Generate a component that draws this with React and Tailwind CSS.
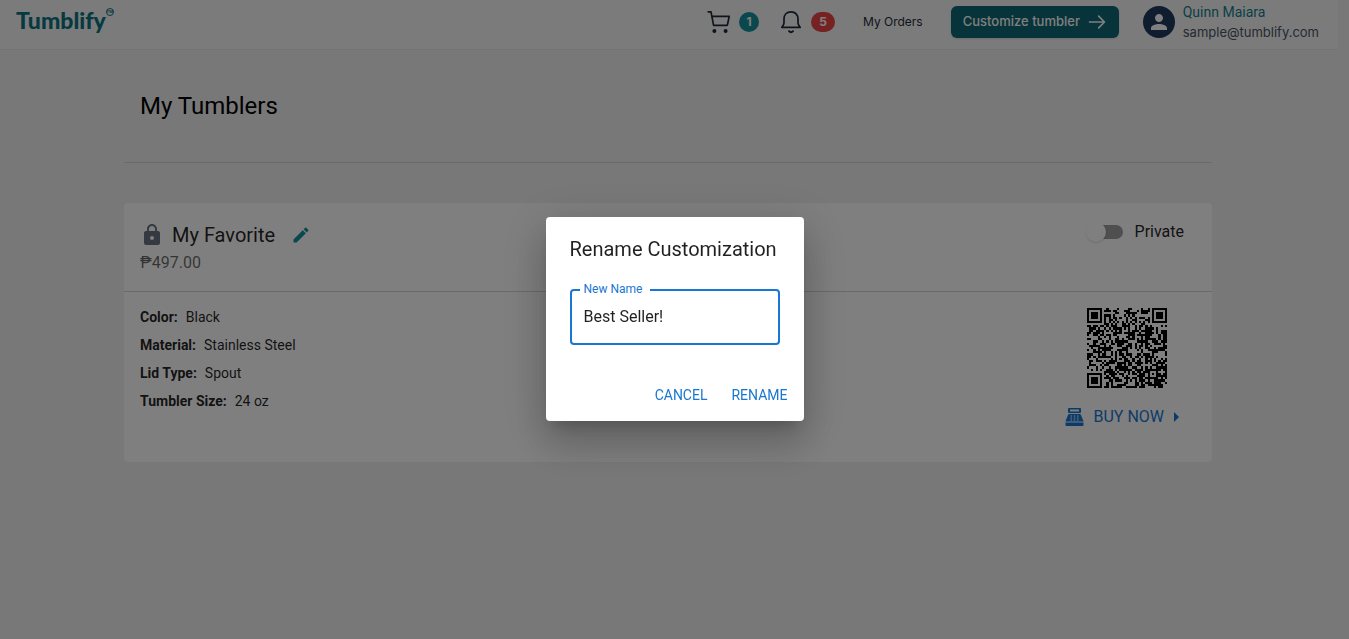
import { useState } from 'react';
import { MdLock, MdEdit, MdPerson, MdArrowRight } from 'react-icons/md';
import { HiOutlineArrowRight } from 'react-icons/hi';

const QR_SIZE = 37;

function ring(x, y, cx, cy, radius) {
  const d = Math.max(Math.abs(x - cx), Math.abs(y - cy));
  if (d > radius + 1) return null;
  if (radius === 3) return d === 3 || d <= 1;
  return d > radius ? null : d !== 1;
}

// Finder, alignment and timing marks around a seeded field of data modules.
function buildQrPath() {
  let seed = 48271;
  let path = '';
  for (let y = 0; y < QR_SIZE; y++) {
    for (let x = 0; x < QR_SIZE; x++) {
      seed = (seed * 48271) % 2147483647;
      let dark = seed / 2147483647 < 0.55;
      if (x === 6 || y === 6) dark = (x + y) % 2 === 0;
      const marks = [
        ring(x, y, 3, 3, 3),
        ring(x, y, QR_SIZE - 4, 3, 3),
        ring(x, y, 3, QR_SIZE - 4, 3),
        ring(x, y, 30, 30, 2),
      ];
      for (const mark of marks) if (mark !== null) dark = mark;
      if (dark) path += `M${x} ${y}h1v1h-1z`;
    }
  }
  return path;
}

const qrPath = buildQrPath();

const specs = [
  ['Color:', 'Black'],
  ['Material:', 'Stainless Steel'],
  ['Lid Type:', 'Spout'],
  ['Tumbler Size:', '24 oz'],
];

function CartIcon() {
  return (
    <svg viewBox="0 0 24 24" className="size-6" fill="none" stroke="currentColor" strokeWidth="1.7" strokeLinecap="round" strokeLinejoin="round" aria-hidden="true">
      <path d="M1.2 1.8H4L6.6 15.4H19.4Q20.3 15.4 20.5 14.5L22.2 6.4H4.9" />
      <circle cx="7.4" cy="21" r="2" fill="currentColor" stroke="none" />
      <circle cx="18.6" cy="21" r="2" fill="currentColor" stroke="none" />
    </svg>
  );
}

function BellIcon() {
  return (
    <svg viewBox="0 0 24 24" className="size-6" fill="none" stroke="currentColor" strokeWidth="1.7" strokeLinecap="round" strokeLinejoin="round" aria-hidden="true">
      <path d="M12 1.8C7.6 1.8 5 5 5 9V12.5Q5 14 4.2 15.2L2.8 17.4H21.2L19.8 15.2Q19 14 19 12.5V9C19 5 16.4 1.8 12 1.8Z" />
      <path d="M10 21.2Q12 23.4 14 21.2" strokeWidth="2" />
    </svg>
  );
}

function RegisterIcon() {
  return (
    <svg viewBox="0 0 20 20" className="size-5" fill="currentColor" aria-hidden="true">
      <path fillRule="evenodd" d="M4 1H15Q16 1 16 2V5Q16 6 15 6H4Q3 6 3 5V2Q3 1 4 1ZM5 2.6V4.4H14V2.6Z" />
      <path fillRule="evenodd" d="M4.5 7H14.5Q15.6 7 16 8L18.6 14.5H.4L3 8Q3.4 7 4.5 7ZM5.5 8.6V9.6H7V8.6ZM8.7 8.6V9.6H10.3V8.6ZM12 8.6V9.6H13.5V8.6ZM5.5 10.6V11.6H7V10.6ZM8.7 10.6V11.6H10.3V10.6ZM12 10.6V11.6H13.5V10.6ZM5.5 12.5V13.5H7V12.5ZM8.7 12.5V13.5H10.3V12.5ZM12 12.5V13.5H13.5V12.5Z" />
      <path d="M.5 15.5H18.5V18Q18.5 19 17.5 19H1.5Q.5 19 .5 18Z" />
    </svg>
  );
}

function Header() {
  return (
    <header className="flex h-[50px] items-start justify-between border-b border-gray-200 bg-[#f7f7f7] pr-[19px] pl-4 font-['Inter',sans-serif]">
      <a href="#home" className="flex items-start pt-1 text-[#0e7481]">
        <span className="font-['Lato',sans-serif] text-[23px] leading-8 font-black">Tumblify</span>
        <span className="mt-1 flex size-2 items-center justify-center rounded-full border border-current text-[4px] leading-none font-bold">TM</span>
      </a>
      <div className="flex h-11 items-center text-[13px] text-gray-800">
        <button type="button" aria-label="Cart" className="flex items-center gap-2">
          <CartIcon />
          <span className="flex size-5 items-center justify-center rounded-full bg-[#14919b] text-xs font-bold text-white">1</span>
        </button>
        <button type="button" aria-label="Notifications" className="ml-5 flex items-center gap-2">
          <BellIcon />
          <span className="flex h-5 w-6 items-center justify-center rounded-full bg-[#ef4444] text-xs font-bold text-white">5</span>
        </button>
        <a href="#orders" className="ml-7 text-xs">My Orders</a>
        <button type="button" className="ml-7 flex h-8 w-[168px] items-center justify-between rounded-md bg-[#0e6674] px-3 text-[13px] font-medium text-white shadow-sm">
          Customize tumbler
          <HiOutlineArrowRight className="size-5" />
        </button>
        <div className="ml-6 flex size-8 items-center justify-center rounded-full bg-[#213a5e] text-white">
          <MdPerson className="size-6" />
        </div>
        <div className="ml-2 flex flex-col">
          <span className="font-['Roboto',sans-serif] text-sm leading-5 text-[#14808a]">Quinn Maiara</span>
          <span className="text-[13px] leading-5 text-gray-600">sample@tumblify.com</span>
        </div>
      </div>
    </header>
  );
}

function TumblerCard() {
  const [shared, setShared] = useState(false);
  return (
    <article className="mt-10 rounded bg-white text-black/87">
      <div className="flex h-[89px] justify-between border-b border-gray-300 px-4 pt-4">
        <div>
          <div className="flex h-8 items-center">
            <MdLock className="size-6 text-gray-500" />
            <h2 className="ml-2 text-xl">My Favorite</h2>
            <button type="button" aria-label="Edit name" className="ml-4 text-[#14919b]">
              <MdEdit className="size-5" />
            </button>
          </div>
          <p className="text-base leading-6 text-black/60">₱497.00</p>
        </div>
        <label className="flex h-6 items-center gap-3 pt-[2px] pr-3 text-base">
          <input
            type="checkbox"
            role="switch"
            checked={shared}
            onChange={(e) => setShared(e.target.checked)}
            className="relative h-[14px] w-[34px] appearance-none rounded-full bg-black/38 before:absolute before:-top-[3px] before:-left-[3px] before:size-5 before:rounded-full before:bg-white before:shadow checked:before:left-4"
          />
          Private
        </label>
      </div>
      <div className="flex justify-between pt-[15px] pr-6 pb-6 pl-4">
        <dl className="flex flex-col gap-2 text-sm leading-5">
          {specs.map(([name, value]) => (
            <div key={name} className="flex gap-2">
              <dt className="font-bold">{name}</dt>
              <dd>{value}</dd>
            </div>
          ))}
        </dl>
        <div className="flex flex-col items-center pt-px">
          <svg viewBox="0 0 37 37" className="size-20" role="img" aria-label="QR code" shapeRendering="crispEdges">
            <path d={qrPath} fill="#000" />
          </svg>
          <button type="button" className="mt-2 flex h-[42px] items-center text-base text-[#1976d2]">
            <RegisterIcon />
            <span className="ml-2">BUY NOW</span>
            <MdArrowRight className="size-6" />
          </button>
        </div>
      </div>
    </article>
  );
}

function RenameDialog() {
  const [name, setName] = useState('Best Seller!');
  return (
    <div className="fixed inset-0 flex items-center justify-center bg-black/50 pb-[2px]">
      <form
        role="dialog"
        aria-labelledby="rename-title"
        onSubmit={(e) => e.preventDefault()}
        className="w-[258px] rounded bg-white shadow-[0_11px_15px_-7px_rgba(0,0,0,0.2),0_24px_38px_3px_rgba(0,0,0,0.14),0_9px_46px_8px_rgba(0,0,0,0.12)]"
      >
        <h2 id="rename-title" className="px-6 py-4 text-xl leading-8 whitespace-nowrap text-black/87">Rename Customization</h2>
        <div className="px-6 pt-2">
          <div className="relative">
            <label htmlFor="new-name" className="absolute -top-2 left-[10px] bg-white pr-2 pl-1 text-xs leading-4 text-[#1976d2]">New Name</label>
            <input
              id="new-name"
              value={name}
              onChange={(e) => setName(e.target.value)}
              className="h-14 w-full rounded border-2 border-[#1976d2] px-3 text-base text-black/87 outline-none"
            />
          </div>
        </div>
        <div className="flex justify-end gap-2 px-2 pt-8 pb-2 text-sm text-[#1976d2]">
          <button type="button" className="h-9 rounded px-2">CANCEL</button>
          <button type="submit" className="h-9 rounded px-2">RENAME</button>
        </div>
      </form>
    </div>
  );
}

export default function App() {
  return (
    <div className="min-h-screen bg-[#f0f0f0] pr-[11px] font-['Roboto',sans-serif]">
      <Header />
      <main className="mr-[2px] px-[124px]">
        <h1 className="border-b border-gray-300 px-4 pt-10 pb-10 text-2xl text-black">My Tumblers</h1>
        <TumblerCard />
      </main>
      <RenameDialog />
    </div>
  );
}
